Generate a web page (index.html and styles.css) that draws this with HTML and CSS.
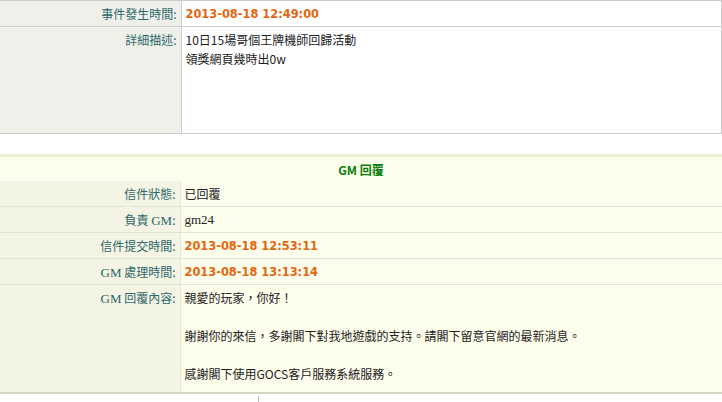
FILE: index.html
```
<!DOCTYPE html>
<html>
<head lang="zh-Hant">
    <meta charset="UTF-8">
    <title>GM 回覆</title>
    <link rel="stylesheet" href="styles.css">
</head>
<body>
<table class="info">
    <colgroup>
        <col class="label-col">
        <col>
    </colgroup>
    <tr class="row">
        <th>事件發生時間:</th>
        <td><span class="date">2013-08-18 12:49:00</span></td>
    </tr>
    <tr class="row big">
        <th>詳細描述:</th>
        <td>10日15場哥個王牌機師回歸活動<br/>領獎網頁幾時出0w</td>
    </tr>
</table>

<table class="reply">
    <colgroup>
        <col class="label-col">
        <col>
    </colgroup>
    <tr>
        <td class="head" colspan="2">GM 回覆</td>
    </tr>
    <tr class="row">
        <th>信件狀態:</th>
        <td>已回覆</td>
    </tr>
    <tr class="row">
        <th>負責 <span class="latin">GM</span>:</th>
        <td class="latin">gm24</td>
    </tr>
    <tr class="row">
        <th>信件提交時間:</th>
        <td><span class="date">2013-08-18 12:53:11</span></td>
    </tr>
    <tr class="row">
        <th><span class="latin">GM</span> 處理時間:</th>
        <td><span class="date">2013-08-18 13:13:14</span></td>
    </tr>
    <tr class="row big last">
        <th><span class="latin">GM</span> 回覆內容:</th>
        <td>親愛的玩家，你好！<br/><br/>謝謝你的來信，多謝閣下對我地遊戲的支持。請閣下留意官網的最新消息。<br/><br/>感謝閣下使用GOCS客戶服務系統服務。</td>
    </tr>
</table>

<div class="more">
    <div class="more-col"></div>
</div>
</body>
</html>
```

FILE: styles.css
```
* {
    padding: 0;
    margin: 0;
}
body {
    background-color: #fff;
    font-family: "Noto Sans CJK TC", "Liberation Serif", serif;
    font-size: 12px;
    color: #222;
}
table {
    border-collapse: collapse;
    table-layout: fixed;
}
th {
    font-weight: normal;
    text-align: right;
    color: #2d6868;
    padding: 0 4px 0 0;
    white-space: nowrap;
}
td {
    padding: 0 0 0 4px;
    white-space: nowrap;
}
.row th,
.row td {
    height: 25px;
    line-height: 19px;
    vertical-align: middle;
}
.big th,
.big td {
    vertical-align: top;
    padding-top: 3px;
}
.latin {
    font-family: "Liberation Serif", serif;
    font-size: 13px;
}
.date {
    font-family: "DejaVu Sans", sans-serif;
    font-weight: bold;
    font-size: 11.4px;
    color: #e5660f;
}

/* 上方資料 */
.info {
    width: 722px;
    border-top: 1px solid #ccc;
    border-right: 1px solid #ccc;
}
.info .label-col {
    width: 181px;
}
.info th {
    background-color: #f0f0eb;
    border-right: 1px solid #ccc;
}
.info td {
    background-color: #fff;
}
.info .row th,
.info .row td {
    border-bottom: 1px solid #ccc;
}
.info .big th,
.info .big td {
    height: 103px;
}

/* GM 回覆 */
.reply {
    width: 722px;
    margin-top: 20px;
}
.reply .label-col {
    width: 180px;
}
.head {
    height: 24px;
    border-top: 3px solid #eaeed7;
    background-color: #e6edca;
    text-align: center;
    color: #0b7d0b;
    font-weight: bold;
    padding: 0;
}
.reply th {
    background-color: #f4f4e4;
    border-right: 1px solid #e4e4d4;
}
.reply td {
    background-color: #fdfdec;
}
.reply .row th,
.reply .row td {
    border-bottom: 1px solid #e3e3d3;
}
.reply .big th,
.reply .big td {
    height: 104px;
}
.reply .last th,
.reply .last td {
    border-bottom: 2px solid #d6d6c8;
}

.more {
    margin-top: 2px;
    height: 8px;
    padding-left: 258px;
}
.more-col {
    width: 0;
    height: 100%;
    border-left: 1px solid #bbb;
}
```
